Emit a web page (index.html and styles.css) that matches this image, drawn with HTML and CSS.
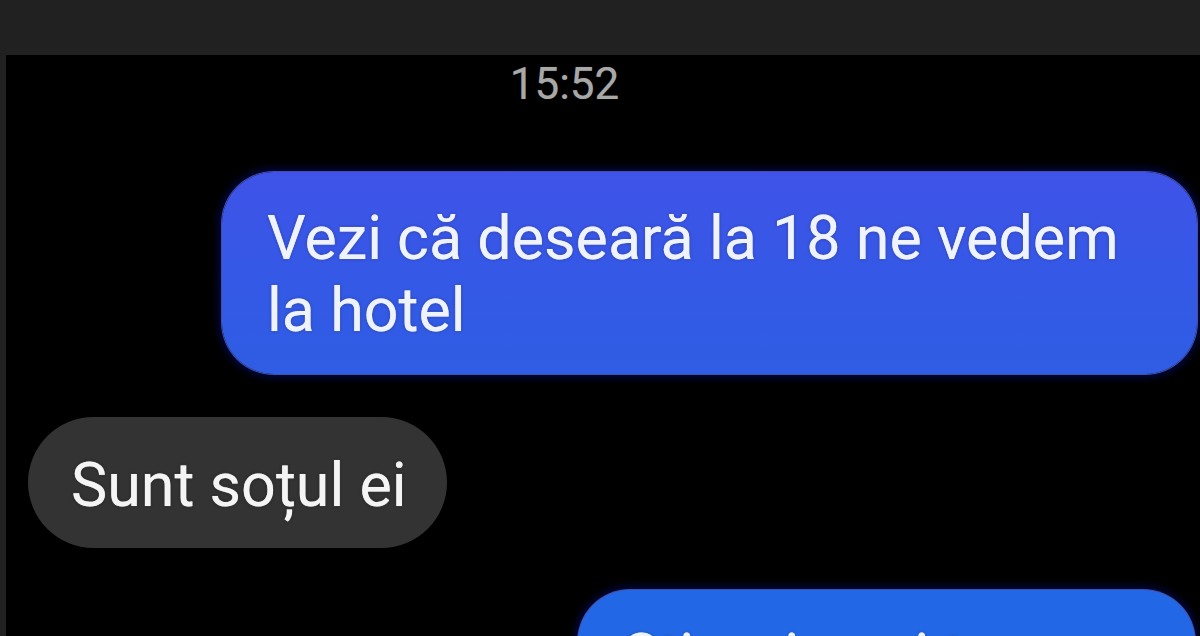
FILE: index.html
```html
<!DOCTYPE html>
<html lang="ro">
<head>
<meta charset="utf-8">
<title>Mesaje</title>
<link rel="stylesheet" href="styles.css">
</head>
<body>
<div class="topbar"></div>
<main class="chat">
  <div class="time">15:52</div>
  <div class="bubble sent first">Vezi că deseară la 18 ne vedem la hotel</div>
  <div class="bubble received">Sunt soțul ei</div>
  <div class="bubble sent second">Știu, vino și tu</div>
</main>
</body>
</html>
```
FILE: styles.css
```css
html, body {
  margin: 0;
  height: 636px;
  overflow: hidden;
}
body {
  background: #212121;
  font-family: Roboto, "Noto Sans", "Liberation Sans", sans-serif;
  display: flex;
  flex-direction: column;
}
.topbar {
  height: 55px;
  flex: none;
}
.chat {
  flex: 1;
  margin-left: 6px;
  background: #000;
  padding: 4px 3px 0 0;
  display: flex;
  flex-direction: column;
  overflow: hidden;
}
.time {
  font-size: 44px;
  line-height: 50px;
  color: #a8a8a8;
  text-align: center;
  padding-right: 74px;
  text-shadow: 0 0 1px rgba(168, 168, 168, 0.5);
}
.bubble {
  font-size: 61px;
  line-height: 72px;
  box-sizing: border-box;
}
.sent {
  align-self: flex-end;
  color: #eef3ff;
  text-shadow: 0 0 1px rgba(238, 243, 255, 0.8), 0 0 3px rgba(0, 0, 60, 0.5);
  box-shadow: 0 0 0 1px rgba(125, 140, 255, 0.55), 0 0 9px 3px rgba(0, 12, 90, 0.85);
}
.first {
  margin-top: 63px;
  width: 975px;
  padding: 30px 50px 28px 45px;
  border-radius: 52px;
  background: linear-gradient(180deg, #3f53e8 0%, #3459e6 55%, #2f5de3 100%);
}
.received {
  align-self: flex-start;
  margin-top: 43px;
  margin-left: 22px;
  padding: 32px 40px 27px 43px;
  border-radius: 66px;
  background: #333333;
  color: #f4f4f4;
  text-shadow: 0 0 1px rgba(244, 244, 244, 0.8), 0 0 3px rgba(0, 0, 0, 0.7);
}
.second {
  margin-top: 42px;
  margin-right: 2px;
  width: 617px;
  padding: 30px 40px 28px 45px;
  border-radius: 52px;
  background: #2268e6;
  white-space: nowrap;
}
```
